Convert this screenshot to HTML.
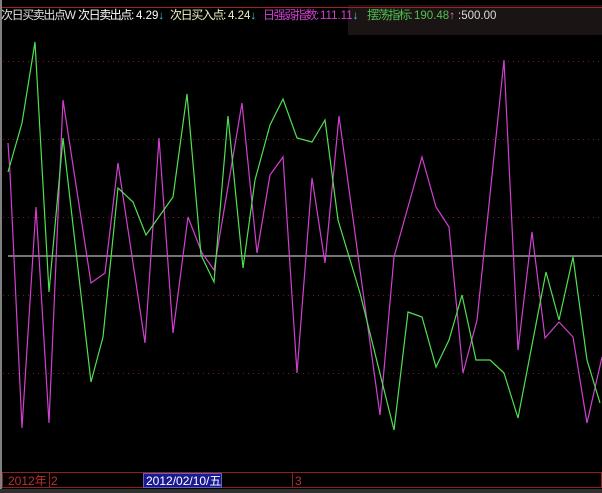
<!DOCTYPE html><html><head><meta charset="utf-8"><style>
body{margin:0;width:602px;height:493px;background:#000;overflow:hidden;position:relative;font-family:"Liberation Sans","Noto Sans CJK SC",sans-serif;font-size:12px}
.t{position:absolute;top:8px;white-space:nowrap;line-height:14px}
.h{font-size:11.5px;top:9px}
.l{font-size:12px;top:8px;letter-spacing:-1.4px}
</style></head><body>
<svg width="602" height="493" style="position:absolute;left:0;top:0">
<rect x="348" y="5" width="254" height="30" fill="#1a1414"/>
<rect x="0" y="0" width="2" height="493" fill="#808080"/>
<line x1="2" y1="7.5" x2="602" y2="7.5" stroke="#a02020"/>
<g stroke="#7a1a1a" stroke-dasharray="1,4">
<line x1="3" y1="61.5" x2="602" y2="61.5"/><line x1="3" y1="139.5" x2="602" y2="139.5"/><line x1="3" y1="217.5" x2="602" y2="217.5"/><line x1="3" y1="295.5" x2="602" y2="295.5"/><line x1="3" y1="373.5" x2="602" y2="373.5"/></g>
<line x1="8" y1="256" x2="602" y2="256" stroke="#e8e8e8"/>
<polyline fill="none" stroke="#d040d0" stroke-width="1.2" points="8,143 10,173 22,428 36,207 49,423 63,100 91,283 105,273 118,163 145,343 159,138 173,333 188,217 202,253 214,270 242,103 257,253 270,175 283,157 297,373 312,178 325,263 339,116 360,270 380,415 394,257 422,157 436,207 449,227 463,373 477,320 504,60 518,350 532,232 545,338 559,322 573,337 587,423 602,357"/>
<polyline fill="none" stroke="#50e050" stroke-width="1.2" points="8,172 22,123 35,42 49,292 63,138 91,382 103,337 118,188 133,202 146,235 173,197 187,94 201,255 214,282 228,116 243,268 255,180 270,125 283,99 297,138 312,142 325,120 338,220 360,293 394,430 408,312 422,317 436,367 449,340 462,295 476,360 490,360 504,373 518,418 546,272 559,320 573,257 587,360 600,403"/>
<rect x="2.5" y="472.5" width="599" height="15" fill="#000" stroke="#902020"/>
<line x1="49.5" y1="473" x2="49.5" y2="488" stroke="#902020"/>
<line x1="292.5" y1="473" x2="292.5" y2="488" stroke="#902020"/>
<rect x="143.5" y="473.5" width="78" height="14" fill="#1a1a90" stroke="#6060c0"/>
<rect x="0" y="489" width="602" height="4" fill="#303030"/>
</svg>
<div class="t l" style="left:1px;color:#e0e0e0">次日买卖出点W</div>
<div class="t l" style="left:78px;color:#fff">次日卖出点:</div>
<div class="t h" style="left:136px;color:#fff">4.29<span style="color:#40d0e0">↓</span></div>
<div class="t l" style="left:170px;color:#f0f0c0">次日买入点:</div>
<div class="t h" style="left:228px;color:#f0f0c0">4.24<span style="color:#40d0e0">↓</span></div>
<div class="t l" style="left:263px;color:#d040d0">日强弱指数:</div>
<div class="t h" style="left:320px;color:#d040d0">111.11<span style="color:#40d0e0">↓</span></div>
<div class="t l" style="left:367px;color:#50c050">摆荡指标:</div>
<div class="t h" style="left:414px;color:#50c050">190.48<span style="color:#f08080">↑</span></div>
<div class="t h" style="left:458px;color:#ddd">:500.00</div>
<div class="t" style="top:474px;left:8px;color:#c03030">2012年</div>
<div class="t" style="top:474px;left:51px;color:#c03030">2</div>
<div class="t" style="top:474px;left:146px;color:#fff">2012/02/10/五</div>
<div class="t" style="top:474px;left:295px;color:#c03030">3</div>
</body></html>
